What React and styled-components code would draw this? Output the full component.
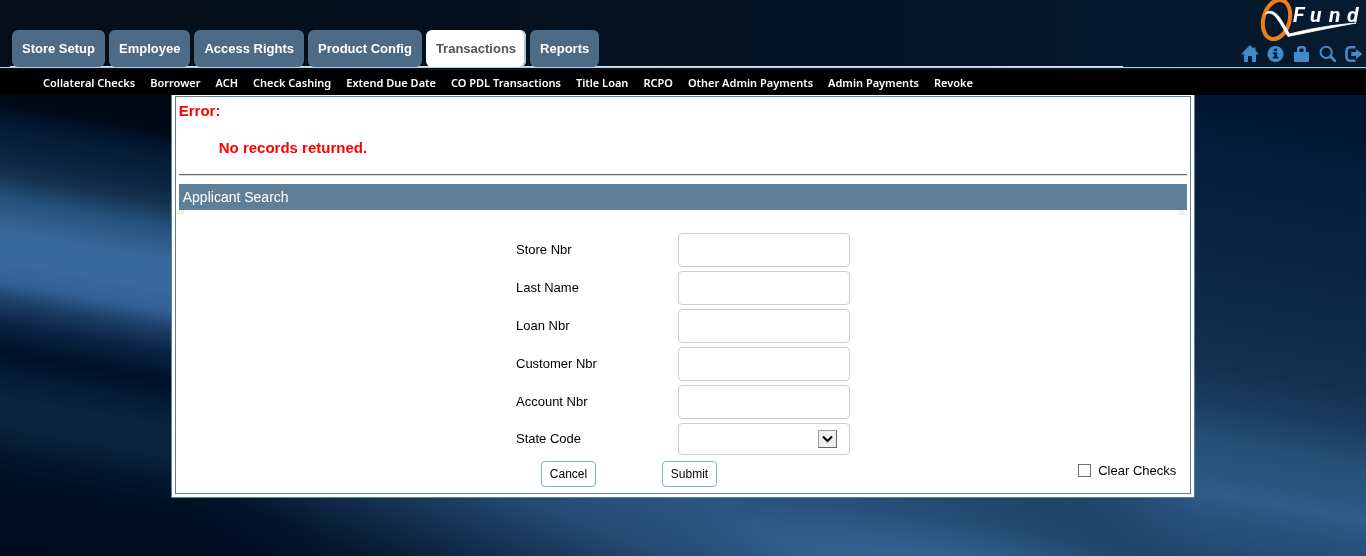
import React from "react";
import styled, { createGlobalStyle } from "styled-components";

const GlobalStyle = createGlobalStyle`
  *, *::before, *::after { box-sizing: border-box; }
  body {
    margin: 0;
    background: #00091c;
    color: #000;
    font-family: "Liberation Sans", Arial, sans-serif;
    font-size: 13px;
  }
`;

const Page = styled.div`
  min-height: 100vh;
`;

const BackdropSvg = styled.svg`
  position: fixed;
  inset: 0;
  width: 100%;
  height: 100%;
  z-index: -1;
`;

const Header = styled.header`
  display: flex;
  align-items: flex-end;
  height: 68px;
  padding-left: 10px;
  border-bottom: 1px solid #c3ccd6;
`;

const TabList = styled.nav`
  flex: 1;
  display: flex;
  gap: 4px;
  height: 37px;
  padding-left: 2px;
  border-bottom: 1px solid #dddddd;
`;

const Tab = styled.a`
  height: 37px;
  padding: 0 10px;
  border-radius: 6px;
  background: ${(p) => (p.$active ? "#ffffff" : "#4c6b86")};
  box-shadow: ${(p) => (p.$active ? "inset -2px 0 0 #b9c3cd" : "none")};
  color: ${(p) => (p.$active ? "#555555" : "#ffffff")};
  font-size: 13px;
  font-weight: bold;
  line-height: 38px;
  text-decoration: none;
  white-space: nowrap;
`;

const Brand = styled.div`
  display: flex;
  flex-direction: column;
  align-items: flex-end;
  width: 243px;
  height: 67px;
`;

const LogoSvg = styled.svg`
  display: block;
  width: 106px;
  height: 45px;
`;

const Tools = styled.div`
  display: flex;
  gap: 8px;
  padding-right: 3px;
`;

const ToolLink = styled.a`
  display: block;
  width: 18px;
  height: 18px;
  color: #428bca;

  svg { display: block; }
`;

const SubNav = styled.nav`
  display: flex;
  gap: 15px;
  height: 25px;
  margin-top: 2px;
  padding-left: 43px;
  background: #000;
`;

const SubLink = styled.a`
  color: #fff;
  font-family: "Noto Sans", "Open Sans", sans-serif;
  font-size: 11px;
  font-weight: 600;
  line-height: 25px;
  text-decoration: none;
  white-space: nowrap;
`;

const Panel = styled.main`
  width: 75%;
  margin: 0 auto;
  padding: 1px 3px 3px;
  border: solid #5f7f98;
  border-width: 0 1px 1px;
  background: #fff;
`;

const PanelBody = styled.div`
  padding: 5px 3px 6px;
  border: 1px solid #5f7f98;
`;

const ErrorBox = styled.section`
  color: #ff0000;
  font-size: 15px;
  font-weight: bold;
  line-height: 17px;
`;

const ErrorTitle = styled.h1`
  margin: 0 0 20px;
  font-size: 15px;
`;

const ErrorText = styled.p`
  margin: 0 0 18px 40px;
`;

const Rule = styled.hr`
  height: 2px;
  margin: 0 0 8px;
  border: solid #666;
  border-width: 1px 0 0;
  background: #ddd;
`;

const SectionTitle = styled.h2`
  margin: 0;
  padding: 0 4px;
  background: #5f7f98;
  color: #fff;
  font-size: 14px;
  font-weight: normal;
  line-height: 26px;
`;

const Corners = styled.div`
  display: flex;
  justify-content: space-between;
  height: 23px;
  padding-right: 3px;

  &::before, &::after {
    content: "";
    width: 5px;
    height: 5px;
    background: #eff1e0;
  }
`;

const Fields = styled.div`
  display: grid;
  gap: 4px;
  width: 334px;
  margin: 0 auto 6px;
`;

const Field = styled.div`
  display: grid;
  grid-template-columns: 162px 172px;
  align-items: center;
`;

const FieldLabel = styled.label`
  padding-bottom: 2px;
`;

const TextInput = styled.input`
  width: 100%;
  height: 34px;
  padding: 0 8px;
  border: 1px solid #ccc;
  border-radius: 4px;
  background: #fff;
  font: inherit;
`;

const SelectWrap = styled.div`
  position: relative;
`;

const Select = styled.select`
  display: block;
  width: 100%;
  height: 32px;
  padding: 0 36px 0 8px;
  appearance: none;
  border: 1px solid #ccc;
  border-radius: 4px;
  background: #fff;
  font: inherit;
`;

const SelectArrow = styled.svg`
  position: absolute;
  top: 7px;
  right: 13px;
  width: 19px;
  height: 18px;
  border: 1px solid;
  border-color: #a0a0a0 #696969 #696969 #a0a0a0;
  background: #efeff2;
  pointer-events: none;
`;

const Actions = styled.div`
  display: grid;
  grid-template-columns: 1fr 334px 1fr;
  align-items: start;
`;

const Buttons = styled.div`
  grid-column: 2;
  display: flex;
  gap: 66px;
  padding-left: 25px;
`;

const Button = styled.button`
  width: 55px;
  height: 26px;
  padding: 0;
  border: 1px solid #7eb0da;
  border-radius: 4px;
  background: #fff;
  color: #000;
  font-family: inherit;
  font-size: 12px;
`;

const CheckLabel = styled.label`
  justify-self: end;
  display: flex;
  align-items: center;
  gap: 7px;
  height: 18px;
  padding-right: 11px;
`;

const CheckBox = styled.input`
  width: 13px;
  height: 13px;
  margin: 0;
  appearance: none;
  border: 1px solid #707070;
  background: #fff;

  &:checked { background: #428bca; }
`;

const leftStops = [
  [0, "#000a16"], [3, "#000b1a"], [6, "#031630"], [14, "#0a2542"],
  [18, "#14324f"], [23, "#25507a"], [30, "#37689a"], [36, "#396a9c"],
  [41, "#326196"], [45, "#1c3f66"], [50, "#0a2344"], [56, "#001028"],
  [61, "#041a36"], [66, "#092440"], [72, "#0a223e"], [78, "#04162e"],
  [83, "#000f22"], [100, "#00091e"],
];

const rightStops = [
  [0, "#001632"], [15, "#041f3d"], [32, "#0a2642"], [46, "#0e2c4a"],
  [57, "#13314e"], [66, "#1b3d62"], [74, "#264f78"], [80, "#295680"],
  [85, "#2d5d88"], [90, "#28537e"], [100, "#22466e"],
];

const floorStops = [
  [0, "#00091c"], [13, "#000e26"], [22, "#06182f"], [32, "#122f4e"],
  [44, "#254a74"], [56, "#2b5782"], [68, "#26507a"], [80, "#214469"],
  [100, "#22466e"],
];

const Stops = ({ list }) =>
  list.map(([at, color]) => <stop key={at} offset={`${at}%`} stopColor={color} />);

const Backdrop = () => (
  <BackdropSvg viewBox="0 0 1366 556" preserveAspectRatio="none" aria-hidden="true">
    <defs>
      <linearGradient id="left" gradientUnits="userSpaceOnUse" x1="0" y1="90" x2="-80" y2="542">
        <Stops list={leftStops} />
      </linearGradient>
      <linearGradient id="right" gradientUnits="userSpaceOnUse" x1="1190" y1="96" x2="1110" y2="544">
        <Stops list={rightStops} />
      </linearGradient>
      <linearGradient id="floor" gradientUnits="userSpaceOnUse" x1="0" y1="530" x2="188" y2="59">
        <Stops list={floorStops} />
      </linearGradient>
      <linearGradient id="top" x1="0" y1="0" x2="1" y2="0">
        <stop offset="0%" stopColor="#050f1b" />
        <stop offset="35%" stopColor="#04101e" />
        <stop offset="100%" stopColor="#061b30" />
      </linearGradient>
      <linearGradient id="fadeRight" gradientUnits="userSpaceOnUse" x1="172" y1="0" x2="320" y2="0">
        <stop offset="0" stopColor="#fff" />
        <stop offset="1" stopColor="#000" />
      </linearGradient>
      <linearGradient id="fadeLeft" gradientUnits="userSpaceOnUse" x1="1080" y1="0" x2="1194" y2="0">
        <stop offset="0" stopColor="#000" />
        <stop offset="1" stopColor="#fff" />
      </linearGradient>
      <mask id="leftMask" maskUnits="userSpaceOnUse" x="0" y="0" width="1366" height="556">
        <rect width="1366" height="556" fill="url(#fadeRight)" />
      </mask>
      <mask id="rightMask" maskUnits="userSpaceOnUse" x="0" y="0" width="1366" height="556">
        <rect width="1366" height="556" fill="url(#fadeLeft)" />
      </mask>
      <radialGradient id="glow">
        <stop offset="0" stopColor="#3a6c9e" stopOpacity="0.7" />
        <stop offset="1" stopColor="#3a6c9e" stopOpacity="0" />
      </radialGradient>
    </defs>
    <rect width="1366" height="556" fill="url(#floor)" />
    <ellipse cx="930" cy="566" rx="260" ry="50" fill="url(#glow)" transform="rotate(8 930 566)" />
    <rect y="80" width="340" height="476" fill="url(#left)" mask="url(#leftMask)" />
    <rect x="1070" y="80" width="296" height="476" fill="url(#right)" mask="url(#rightMask)" />
    <rect width="1366" height="80" fill="url(#top)" />
  </BackdropSvg>
);

const Logo = () => (
  <LogoSvg viewBox="0 0 106 45" role="img" aria-label="QFund">
    <ellipse cx="16.5" cy="19.5" rx="13" ry="20" fill="none" stroke="#ee7d1a" strokeWidth="4" transform="rotate(16 16.5 19.5)" />
    <path d="M5 14 C9 9 15 11 20 18 C24 24 27 30 29.5 34 C48 29 72 25 96 23 C74 27 50 32 28 36.5 C24 30 21 24 17 18.5 C13 13 9 12 5 14 Z" fill="#fff" stroke="#fff" strokeWidth="0.8" />
    <text
      x="33 50 69 87"
      y="22"
      fill="#fff"
      fontFamily="Roboto, 'Liberation Sans', sans-serif"
      fontSize="21"
      fontStyle="italic"
      fontWeight="bold"
    >
      Fund
    </text>
  </LogoSvg>
);

const toolIcons = {
  Home: <path d="M9 0 L18 9.2 H15 V17 H11 V11 H7 V17 H3 V9.2 H0 Z M12.5 2.5 H14.5 V6 L12.5 4 Z" />,
  Information: (
    <path fillRule="evenodd" d="M8.5 1 a8 8 0 1 0 0.01 0 Z M7 3.7 H10 V6 H7 Z M5.7 7.2 H10.1 V11.8 H11.5 V13.5 H5.7 V11.8 H7.1 V8.9 H5.7 Z" />
  ),
  Lock: (
    <path fillRule="evenodd" d="M4 7 V4 Q4 1 7 1 H10 Q13 1 13 4 V7 H15 Q16 7 16 8 V16 Q16 17 15 17 H2 Q1 17 1 16 V8 Q1 7 2 7 Z M6.5 7 H10.5 V4.5 Q10.5 3.5 9.5 3.5 H7.5 Q6.5 3.5 6.5 4.5 Z" />
  ),
  Search: (
    <g fill="none" stroke="currentColor">
      <circle cx="7.2" cy="7.3" r="5.6" strokeWidth="2" />
      <path d="M11.5 11.5 L15.8 15.8" strokeWidth="2.8" strokeLinecap="round" />
    </g>
  ),
  "Log out": (
    <g>
      <path d="M10.5 2.2 H5.5 Q1.5 2.2 1.5 6.2 V11.8 Q1.5 15.8 5.5 15.8 H10.5" fill="none" stroke="currentColor" strokeWidth="2.6" />
      <path d="M6.3 7 H11 V4 L17.5 9 L11 14 V11 H6.3 Z" />
    </g>
  ),
};

const tabs = ["Store Setup", "Employee", "Access Rights", "Product Config", "Transactions", "Reports"];

const subLinks = [
  "Collateral Checks", "Borrower", "ACH", "Check Cashing", "Extend Due Date",
  "CO PDL Transactions", "Title Loan", "RCPO", "Other Admin Payments",
  "Admin Payments", "Revoke",
];

const textFields = [
  ["storeNbr", "Store Nbr"],
  ["lastName", "Last Name"],
  ["loanNbr", "Loan Nbr"],
  ["customerNbr", "Customer Nbr"],
  ["accountNbr", "Account Nbr"],
];

export default function App() {
  return (
    <Page>
      <GlobalStyle />
      <Backdrop />
      <Header>
        <TabList aria-label="Main">
          {tabs.map((name) => (
            <Tab key={name} href="#" $active={name === "Transactions"}>{name}</Tab>
          ))}
        </TabList>
        <Brand>
          <Logo />
          <Tools>
            {Object.entries(toolIcons).map(([name, icon]) => (
              <ToolLink key={name} href="#" aria-label={name}>
                <svg width="18" height="18" viewBox="0 0 18 18" fill="currentColor">{icon}</svg>
              </ToolLink>
            ))}
          </Tools>
        </Brand>
      </Header>
      <SubNav aria-label="Transactions">
        {subLinks.map((name) => (
          <SubLink key={name} href="#">{name}</SubLink>
        ))}
      </SubNav>
      <Panel>
        <PanelBody>
          <ErrorBox role="alert">
            <ErrorTitle>Error:</ErrorTitle>
            <ErrorText>No records returned.</ErrorText>
          </ErrorBox>
          <Rule />
          <SectionTitle>Applicant Search</SectionTitle>
          <Corners />
          <form onSubmit={(e) => e.preventDefault()}>
            <Fields>
              {textFields.map(([id, label]) => (
                <Field key={id}>
                  <FieldLabel htmlFor={id}>{label}</FieldLabel>
                  <TextInput id={id} type="text" />
                </Field>
              ))}
              <Field>
                <FieldLabel htmlFor="stateCode">State Code</FieldLabel>
                <SelectWrap>
                  <Select id="stateCode" defaultValue="">
                    <option value=""></option>
                    <option value="CO">CO</option>
                  </Select>
                  <SelectArrow viewBox="0 0 17 16" aria-hidden="true">
                    <path d="M4 5.5 L8.5 10 L13 5.5" fill="none" stroke="#000" strokeWidth="2" />
                  </SelectArrow>
                </SelectWrap>
              </Field>
            </Fields>
            <Actions>
              <Buttons>
                <Button type="button">Cancel</Button>
                <Button type="submit">Submit</Button>
              </Buttons>
              <CheckLabel>
                <CheckBox type="checkbox" />
                Clear Checks
              </CheckLabel>
            </Actions>
          </form>
        </PanelBody>
      </Panel>
    </Page>
  );
}
